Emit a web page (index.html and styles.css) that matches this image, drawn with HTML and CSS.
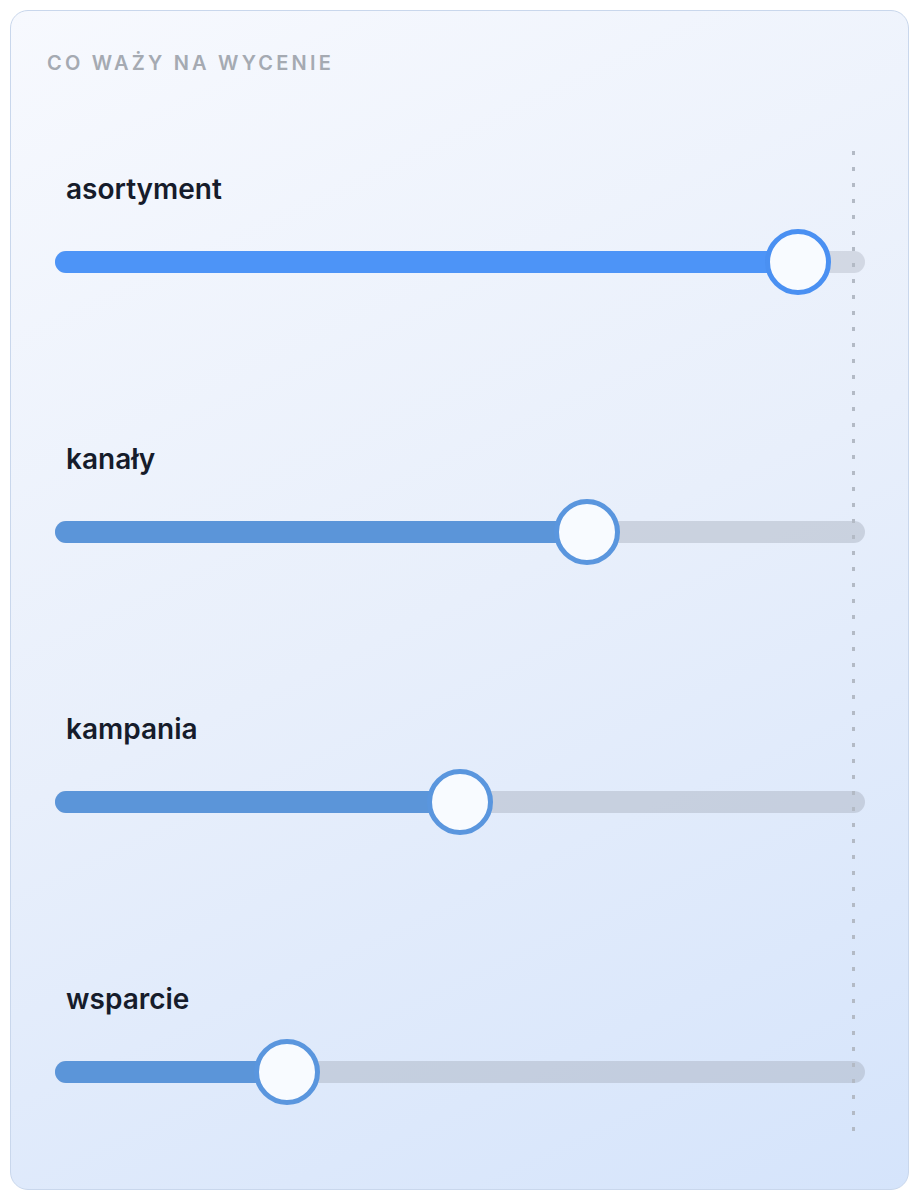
FILE: index.html
```html
<!DOCTYPE html>
<html lang="pl">

	<head>
		<meta charset="UTF-8">
		<title>Co waży na wycenie</title>
		<link rel="stylesheet" href="styles.css">
	</head>

	<body>
		<div class="card">
			<h2 class="card-title">Co waży na wycenie</h2>
			<div class="weights">
				<div class="weight weight-main">
					<div class="weight-name">asortyment</div>
					<div class="track">
						<div class="fill" style="width: 91.7%"><span class="knob"></span></div>
					</div>
				</div>
				<div class="weight">
					<div class="weight-name">kanały</div>
					<div class="track">
						<div class="fill" style="width: 65.7%"><span class="knob"></span></div>
					</div>
				</div>
				<div class="weight">
					<div class="weight-name">kampania</div>
					<div class="track">
						<div class="fill" style="width: 50%"><span class="knob"></span></div>
					</div>
				</div>
				<div class="weight">
					<div class="weight-name">wsparcie</div>
					<div class="track">
						<div class="fill" style="width: 28.6%"><span class="knob"></span></div>
					</div>
				</div>
				<!-- linia limitu -->
				<span class="limit"></span>
			</div>
		</div>
	</body>

</html>
```

FILE: styles.css
```css
* {
	margin: 0;
	padding: 0;
	box-sizing: border-box;
}

body {
	font-family: Inter, "Noto Sans", sans-serif;
	background: #fff;
}

.card {
	width: 899px;
	height: 1180px;
	margin: 10px;
	padding: 40px 43px 58px 36px;
	border: 1px solid #c9d7ec;
	border-radius: 18px;
	background: linear-gradient(155deg, #f7f9fe 0%, #e8effb 50%, #d5e4fb 100%);
}

.card-title {
	font-size: 20px;
	line-height: 24px;
	font-weight: 600;
	letter-spacing: 3.2px;
	text-transform: uppercase;
	color: #a5aab2;
}

.weights {
	position: relative;
	margin: 73px 0 0 8px;
	padding: 25px 0 27px;
	display: flex;
	flex-direction: column;
	gap: 148px;
}

.weight {
	display: flex;
	flex-direction: column;
	gap: 24px;
}

.weight-name {
	padding-left: 11px;
	font-size: 28px;
	line-height: 32px;
	font-weight: 600;
	color: #161c2b;
}

/* szyna suwaka */
.track {
	position: relative;
	height: 66px;
	display: flex;
	align-items: center;
}

.track::before {
	content: "";
	position: absolute;
	left: 0;
	right: 0;
	top: 22px;
	height: 22px;
	border-radius: 11px;
	background: rgba(160, 168, 182, 0.4);
}

.fill {
	position: relative;
	height: 22px;
	border-radius: 11px;
	background: #5b95d9;
}

.knob {
	position: absolute;
	right: -33px;
	top: -22px;
	width: 66px;
	height: 66px;
	border: 5px solid #5a96de;
	border-radius: 50%;
	background: #f8fbff;
}

.weight-main .fill {
	background: #4d94f7;
}

.weight-main .knob {
	border-color: #4a90f2;
}

.weight-main .track::before {
	background: rgba(170, 176, 188, 0.38);
}

.limit {
	position: absolute;
	top: 0;
	bottom: 0;
	right: 10px;
	width: 3px;
	background: linear-gradient(#b3bac5 0 4px, transparent 4px 16px) 0 3px / 3px 16px repeat-y;
	border-radius: 2px;
	z-index: 2;
}
```
